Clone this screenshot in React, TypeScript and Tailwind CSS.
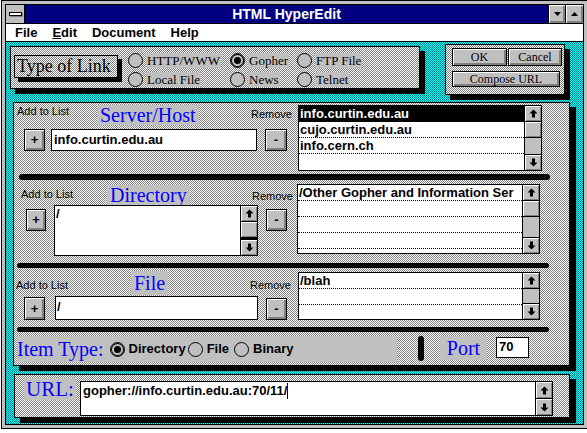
import React from "react";

const serif = "font-['Liberation_Serif',serif]";
const sans = "font-['Liberation_Sans',Arial,sans-serif]";
const grayDither = "bg-[repeating-conic-gradient(#808080_0%_25%,#ffffff_0%_50%)] bg-size-[2px_2px]";
const cyanDither = "bg-[repeating-conic-gradient(#008080_0%_25%,#00ffff_0%_50%)] bg-size-[2px_2px]";
const raised = "bg-[#c0c0c0] shadow-[inset_1px_1px_0_#fff,inset_-2px_-2px_0_#808080]";
const thinRaised = "bg-[#c0c0c0] shadow-[inset_1px_1px_0_#fff,inset_-1px_-1px_0_#808080]";
const blueTitle = `inline-block bg-[#c0c0c0] text-[#0000ff] text-[20px] leading-[20px] px-[3px] ${serif}`;
const small = `text-[11px] leading-[13px] text-black ${sans}`;

const Arrow = ({ down }: { down?: boolean }) => (
  <svg width="9" height="9" viewBox="0 0 9 9" className={down ? "rotate-180" : ""}>
    <path d="M4.5 0.5 L8.5 4.5 H6 V8.5 H3 V4.5 H0.5 Z" fill="#000" />
  </svg>
);

const Btn = ({ className, children }: { className: string; children: React.ReactNode }) => (
  <div className={`border border-black flex items-center justify-center shrink-0 ${raised} ${className}`}>
    {children}
  </div>
);

const VScroll = ({ thumb, track = true }: { thumb?: boolean; track?: boolean }) => (
  <div className="w-[17px] border-l border-black flex flex-col shrink-0">
    <div className={`h-[16px] border-b border-black flex items-center justify-center ${thinRaised}`}>
      <Arrow />
    </div>
    {thumb && <div className={`h-[16px] border-b border-black ${thinRaised}`} />}
    {track ? <div className="flex-1 bg-[#c0c0c0]" /> : <div className="flex-1 border-b border-black bg-[#c0c0c0]" />}
    <div className={`h-[16px] border-t border-black flex items-center justify-center ${thinRaised}`}>
      <Arrow down />
    </div>
  </div>
);

const ListBox = ({
  items,
  selected,
  thumb,
  className,
}: {
  items: string[];
  selected?: number;
  thumb?: boolean;
  className: string;
}) => (
  <div className={`flex border border-black bg-white shrink-0 ${className}`}>
    <div className="flex-1 flex flex-col overflow-hidden">
      {items.map((t, i) => (
        <div
          key={i}
          className={`h-[16px] shrink-0 whitespace-nowrap text-[13px] leading-[15px] font-bold pl-[1px] ${sans} ${
            i < items.length - 1 ? "border-b border-dotted border-black" : ""
          } ${selected === i ? "bg-black text-white" : "text-black"}`}
        >
          {t}
        </div>
      ))}
    </div>
    <VScroll thumb={thumb} />
  </div>
);

const Radio = ({ on }: { on?: boolean }) => (
  <span
    className={`w-[15px] h-[15px] rounded-full border border-black bg-[#c0c0c0] flex items-center justify-center shrink-0 ${
      on ? "shadow-[inset_0_0_0_1px_#000]" : ""
    }`}
  >
    {on && <span className="w-[7px] h-[7px] rounded-full bg-black" />}
  </span>
);

const LinkRadio = ({ label, on }: { label: string; on?: boolean }) => (
  <div className="flex items-center h-[19px]">
    <Radio on={on} />
    <span className={`ml-[3px] bg-[#c0c0c0] px-[1px] text-[13px] leading-[15px] text-black ${serif}`}>{label}</span>
  </div>
);

const TypeRadio = ({ label, on, className }: { label: string; on?: boolean; className: string }) => (
  <div className={`flex items-center ${className}`}>
    <Radio on={on} />
    <span className={`ml-[4px] text-[13px] font-bold text-black ${sans}`}>{label}</span>
  </div>
);

export default function App() {
  return (
    <div className="w-[587px] h-[433px] overflow-hidden bg-white relative">
      <div className="ml-[1px] w-[587px] h-[429px] border border-black bg-[#c0c0c0] p-[3px]">
        <div className="w-full h-full border border-black flex flex-col bg-white">
          {/* title bar */}
          <div className="h-[19px] flex border-b border-black shrink-0">
            <div className="w-[19px] border-r border-black bg-[#c0c0c0] flex items-center justify-center">
              <div className="w-[13px] h-[4px] bg-white border border-black shadow-[1px_1px_0_#808080]" />
            </div>
            <div className={`flex-1 bg-[#000080] text-white text-[14px] font-bold leading-[19px] text-center ${sans}`}>
              HTML HyperEdit
            </div>
            <div className={`w-[17px] border-l border-black flex items-center justify-center ${raised}`}>
              <svg width="7" height="4" viewBox="0 0 7 4">
                <path d="M0 0 H7 L3.5 4 Z" fill="#000" />
              </svg>
            </div>
            <div className={`w-[18px] border-l border-black flex items-center justify-center ${raised}`}>
              <svg width="7" height="4" viewBox="0 0 7 4">
                <path d="M0 4 H7 L3.5 0 Z" fill="#000" />
              </svg>
            </div>
          </div>

          {/* menu bar */}
          <div className={`h-[18px] flex items-center gap-[15px] pl-[9px] border-b border-black shrink-0 text-[13px] font-bold text-black ${sans}`}>
            <span>File</span>
            <span>
              <u>E</u>dit
            </span>
            <span>Document</span>
            <span>Help</span>
          </div>

          {/* client area */}
          <div className={`flex-1 flex flex-col ${cyanDither}`}>
            <div className="flex items-start shrink-0">
              {/* Type of link */}
              <div className={`ml-[4px] mt-[4px] w-[410px] h-[43px] border border-black shadow-[5px_5px_0_#000] flex items-start ${grayDither}`}>
                <div
                  className={`ml-[3px] mt-[8px] w-[104px] h-[23px] border border-black shadow-[4px_4px_0_#000] pl-[2px] text-[18px] leading-[21px] text-black ${serif} ${grayDither}`}
                >
                  Type of Link
                </div>
                <div className="ml-[10px] mt-[4px] w-[102px] flex flex-col">
                  <LinkRadio label="HTTP/WWW" />
                  <LinkRadio label="Local File" />
                </div>
                <div className="mt-[4px] w-[67px] flex flex-col">
                  <LinkRadio label="Gopher" on />
                  <LinkRadio label="News" />
                </div>
                <div className="mt-[4px] flex flex-col">
                  <LinkRadio label="FTP File" />
                  <LinkRadio label="Telnet" />
                </div>
              </div>

              {/* OK / Cancel */}
              <div className={`ml-[25px] mt-[2px] w-[120px] h-[51px] border border-black shadow-[5px_5px_0_#000] flex flex-col ${grayDither}`}>
                <div className="flex mt-[3px] ml-[6px]">
                  <Btn className={`w-[55px] h-[18px] text-[12px] text-black ${serif}`}>OK</Btn>
                  <Btn className={`ml-[1px] w-[54px] h-[18px] text-[12px] text-black ${serif}`}>Cancel</Btn>
                </div>
                <Btn className={`mt-[5px] ml-[6px] w-[108px] h-[16px] text-[12px] text-black ${serif}`}>Compose URL</Btn>
              </div>
            </div>

            {/* main panel */}
            <div className={`ml-[7px] mt-[7px] w-[557px] h-[264px] shrink-0 border border-black shadow-[6px_5px_0_#000] flex flex-col ${grayDither}`}>
              {/* Server/Host */}
              <div className="flex h-[71px] shrink-0">
                <div className="w-[284px] flex flex-col">
                  <div className="flex items-start h-[26px]">
                    <span className={`ml-[3px] mt-[2px] w-[80px] ${small}`}>Add to List</span>
                    <div className="w-[154px] mt-[1px]">
                      <span className={blueTitle}>Server/Host</span>
                    </div>
                    <span className={`mt-[5px] ${small}`}>Remove</span>
                  </div>
                  <div className="flex items-start">
                    <Btn className={`ml-[10px] w-[21px] h-[22px] text-[13px] font-bold ${sans}`}>+</Btn>
                    <div className={`ml-[6px] w-[206px] h-[22px] border border-black bg-white pl-[2px] text-[13px] leading-[19px] font-bold text-black ${sans}`}>
                      info.curtin.edu.au
                    </div>
                    <Btn className={`ml-[8px] w-[22px] h-[22px] text-[13px] font-bold ${sans}`}>-</Btn>
                  </div>
                </div>
                <ListBox
                  className="mt-[2px] w-[244px] h-[66px]"
                  items={["info.curtin.edu.au", "cujo.curtin.edu.au", "info.cern.ch", ""]}
                  selected={0}
                  thumb
                />
              </div>
              <div className="ml-[5px] w-[531px] h-[6px] rounded-full bg-black shrink-0" />

              {/* Directory */}
              <div className="flex h-[83px] shrink-0">
                <div className="w-[283px] flex flex-col">
                  <div className="flex items-start h-[25px]">
                    <span className={`ml-[7px] mt-[8px] w-[86px] ${small}`}>Add to List</span>
                    <div className="w-[145px] mt-[4px]">
                      <span className={blueTitle}>Directory</span>
                    </div>
                    <span className={`mt-[10px] ${small}`}>Remove</span>
                  </div>
                  <div className="flex items-start">
                    <Btn className={`ml-[12px] mt-[4px] w-[20px] h-[22px] text-[13px] font-bold ${sans}`}>+</Btn>
                    <div className="ml-[8px] w-[204px] h-[51px] border border-black bg-white flex">
                      <div className={`flex-1 pl-[1px] text-[13px] leading-[16px] font-bold text-black ${sans}`}>/</div>
                      <VScroll thumb track={false} />
                    </div>
                    <Btn className={`ml-[8px] mt-[4px] w-[21px] h-[22px] text-[13px] font-bold ${sans}`}>-</Btn>
                  </div>
                </div>
                <ListBox
                  className="mt-[4px] w-[243px] h-[70px]"
                  items={["/Other Gopher and Information Ser", "", "", "", " "]}
                  thumb
                />
              </div>
              <div className="ml-[3px] w-[532px] h-[5px] rounded-full bg-black shrink-0" />

              {/* File */}
              <div className="flex h-[59px] shrink-0">
                <div className="w-[284px] flex flex-col">
                  <div className="flex items-start h-[28px]">
                    <span className={`ml-[2px] mt-[11px] w-[115px] ${small}`}>Add to List</span>
                    <div className="w-[119px] mt-[3px]">
                      <span className={`${blueTitle} leading-[24px]`}>File</span>
                    </div>
                    <span className={`mt-[11px] ${small}`}>Remove</span>
                  </div>
                  <div className="flex items-start">
                    <Btn className={`ml-[10px] mt-[1px] w-[21px] h-[23px] text-[13px] font-bold ${sans}`}>+</Btn>
                    <div className={`ml-[10px] w-[203px] h-[24px] border border-black bg-white pl-[1px] text-[13px] leading-[20px] font-bold text-black ${sans}`}>
                      /
                    </div>
                    <Btn className={`ml-[8px] mt-[2px] w-[21px] h-[22px] text-[13px] font-bold ${sans}`}>-</Btn>
                  </div>
                </div>
                <ListBox className="mt-[4px] w-[242px] h-[48px]" items={["/blah", "", " "]} />
              </div>
              <div className="ml-[3px] w-[532px] h-[5px] rounded-full bg-black shrink-0" />

              {/* Item type / port */}
              <div className="flex items-start flex-1">
                <div className="ml-[3px] mt-[4px] w-[380px] h-[26px] bg-[#c0c0c0] flex items-center">
                  <span className={`text-[#0000ff] text-[20px] leading-[22px] ${serif}`}>Item Type:</span>
                  <TypeRadio className="ml-[6px]" label="Directory" on />
                  <TypeRadio className="ml-[2px]" label="File" />
                  <TypeRadio className="ml-[5px]" label="Binary" />
                </div>
                <div className="ml-[21px] mt-[4px] w-[6px] h-[25px] rounded-full bg-black" />
                <div className={`ml-[16px] mt-[4px] w-[47px] h-[24px] bg-[#c0c0c0] text-center text-[#0000ff] text-[20px] leading-[24px] ${serif}`}>
                  Port
                </div>
                <div className={`ml-[9px] mt-[5px] w-[33px] h-[21px] border border-black bg-white pl-[2px] text-[13px] leading-[18px] font-bold text-black ${sans}`}>
                  70
                </div>
              </div>
            </div>

            {/* URL panel */}
            <div className={`ml-[8px] mt-[8px] w-[556px] h-[44px] shrink-0 border border-black shadow-[6px_5px_0_#000] flex items-start ${grayDither}`}>
              <div className={`ml-[9px] mt-[3px] w-[52px] h-[22px] bg-[#c0c0c0] text-center text-[#0000ff] text-[21px] leading-[22px] ${serif}`}>
                URL:
              </div>
              <div className="ml-[4px] mt-[6px] w-[473px] h-[35px] border border-black bg-white flex">
                <div className={`flex-1 pl-[2px] text-[13px] leading-[18px] font-bold text-black flex items-start ${sans}`}>
                  gopher://info.curtin.edu.au:70/11/
                  <span className="inline-block w-[1px] h-[16px] mt-[1px] bg-black" />
                </div>
                <div className="w-[17px] border-l border-black flex flex-col">
                  <div className={`flex-1 border-b border-black flex items-center justify-center ${thinRaised}`}>
                    <Arrow />
                  </div>
                  <div className={`flex-1 flex items-center justify-center ${thinRaised}`}>
                    <Arrow down />
                  </div>
                </div>
              </div>
            </div>
          </div>
        </div>
      </div>
    </div>
  );
}
